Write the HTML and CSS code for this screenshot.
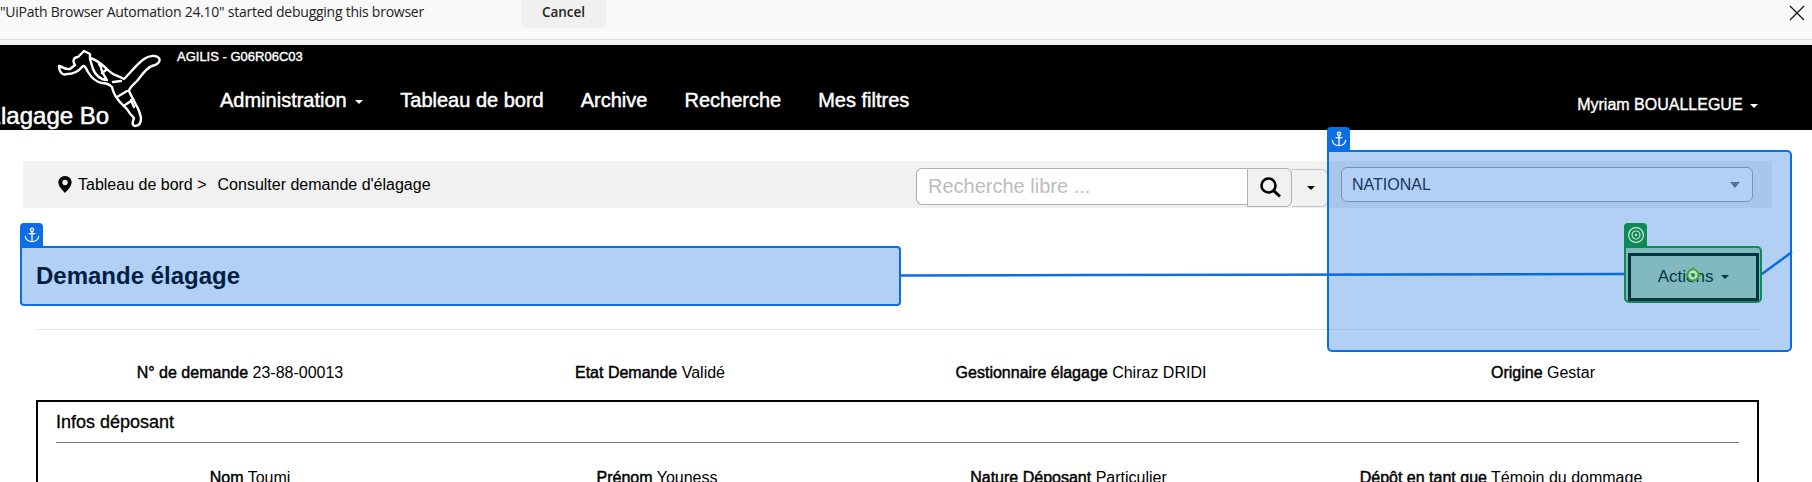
FILE: index.html
```html
<!DOCTYPE html>
<html lang="fr">
<head>
<meta charset="utf-8">
<title>Consulter demande d'élagage</title>
<link rel="stylesheet" href="styles.css">
</head>
<body>
<div class="page">
  <div class="debugbar">
    <span class="debugtext">"UiPath Browser Automation 24.10" started debugging this browser</span>
    <button class="cancel">Cancel</button>
    <svg class="close" width="16" height="16" viewBox="0 0 16 16"><path d="M1 1 L15 15 M15 1 L1 15" stroke="#111" stroke-width="1.2" fill="none"/></svg>
  </div>
  <header class="navbar">
    <div class="brand">
      <svg class="puma" width="120" height="85" viewBox="0 0 120 85">
        <g fill="none" stroke="#fff" stroke-width="2.4" stroke-linejoin="round" stroke-linecap="round">
          <path d="M18 21 C22 22 25 25 29 24 L34 20 C31 16 33 12 37 12 L43 6 L49 9 L49 13 C57 15 63 21 68 26 C73 31 78 31 83 34 C90 27 96 19 103 14 C109 10 115 10 118 13 C120 17 116 20 111 21 C105 23 101 30 96 36 C92 40 88 43 88 46 C90 51 93 55 95 60 C98 64 99 69 100 73 C100 78 98 81 94 81 C90 80 92 76 93 73 C90 70 88 68 86 64 C82 60 78 57 76 53 C73 50 72 46 71 42 C68 39 65 38 61 38 C55 37 50 32 47 27 C44 21 43 20 41 22 C37 27 31 29 26 29 C22 31 18 27 18 21 Z"/>
          <path d="M49 14 L52 24 C54 30 60 35 66 35 C63 30 60 26 60 22 L58 19"/>
          <path d="M61 28 L65 25"/>
          <path d="M72 37 L80 36 M76 52 L86 46 M84 60 L90 56 M93 62 L90 55"/>
        </g>
      </svg>
      <span class="brandname">Elagage Bo</span>
    </div>
    <div class="navmain">
      <div class="appcode">AGILIS - G06R06C03</div>
      <nav class="menu">
        <a class="menuitem">Administration <i class="caret caret-white"></i></a>
        <a class="menuitem">Tableau de bord</a>
        <a class="menuitem">Archive</a>
        <a class="menuitem">Recherche</a>
        <a class="menuitem">Mes filtres</a>
      </nav>
    </div>
    <div class="user">Myriam BOUALLEGUE <i class="caret caret-white"></i></div>
  </header>

  <main class="content">
    <div class="crumbs">
      <svg class="pin" width="14" height="17" viewBox="0 0 14 17"><path fill-rule="evenodd" d="M7 0 C3 0 0.4 3 0.4 6.4 C0.4 10.4 5 14.4 7 17 C9 14.4 13.6 10.4 13.6 6.4 C13.6 3 11 0 7 0 Z M7 3.8 A2.7 2.7 0 1 1 7 9.2 A2.7 2.7 0 1 1 7 3.8 Z" fill="#000"/></svg>
      <span class="crumb">Tableau de bord &gt;</span>
      <span class="crumb crumb-current">Consulter demande d'élagage</span>
      <div class="search">
        <input class="searchinput" placeholder="Recherche libre ...">
        <button class="searchbtn">
          <svg width="22" height="22" viewBox="0 0 22 22"><circle cx="9.5" cy="9.5" r="7" fill="none" stroke="#000" stroke-width="2.6"/><path d="M14.6 14.6 L21 20.5" stroke="#000" stroke-width="3" fill="none"/></svg>
        </button>
        <button class="caretbtn"><i class="caret"></i></button>
      </div>
      <div class="scope">NATIONAL<i class="caret caret-scope"></i></div>
    </div>

    <section class="titlerow">
      <h1 class="title">Demande élagage</h1>
      <button class="actions">Actions <i class="caret"></i></button>
    </section>
    <hr class="rule">

    <div class="fields fields-top">
      <div class="field"><b>N° de demande</b> 23-88-00013</div>
      <div class="field"><b>Etat Demande</b> Validé</div>
      <div class="field"><b>Gestionnaire élagage</b> Chiraz DRIDI</div>
      <div class="field"><b>Origine</b> Gestar</div>
    </div>

    <section class="panel">
      <h2 class="paneltitle">Infos déposant</h2>
      <div class="fields fields-panel">
        <div class="field"><b>Nom</b> Toumi</div>
        <div class="field"><b>Prénom</b> Youness</div>
        <div class="field"><b>Nature Déposant</b> Particulier</div>
        <div class="field"><b>Dépôt en tant que</b> Témoin du dommage</div>
      </div>
    </section>
  </main>

  <svg class="links" width="1812" height="482" viewBox="0 0 1812 482">
    <path d="M900 275.5 L1090 275 L1400 274.5 L1624 274" stroke="#0b6ee5" stroke-width="2.4" fill="none"/>
    <path d="M1762 274 L1792 252" stroke="#0b6ee5" stroke-width="2.4" fill="none"/>
  </svg>

  <div class="hl hl-title"></div>
  <div class="tab tab-title">
    <svg width="16" height="16" viewBox="0 0 16 16"><g fill="none" stroke="#fff" stroke-width="1.3" stroke-linecap="round"><circle cx="8" cy="2.8" r="1.6"/><path d="M8 4.4 V14.6 M5 6.6 H11 M1.4 9.5 C1.6 12.8 4.6 14.6 8 14.6 C11.4 14.6 14.4 12.8 14.6 9.5"/></g></svg>
  </div>
  <div class="hl hl-scope"></div>
  <div class="tab tab-scope">
    <svg width="16" height="16" viewBox="0 0 16 16"><g fill="none" stroke="#fff" stroke-width="1.3" stroke-linecap="round"><circle cx="8" cy="2.8" r="1.6"/><path d="M8 4.4 V14.6 M5 6.6 H11 M1.4 9.5 C1.6 12.8 4.6 14.6 8 14.6 C11.4 14.6 14.4 12.8 14.6 9.5"/></g></svg>
  </div>
  <div class="hl-target"></div>
  <div class="tab tab-target">
    <svg width="18" height="18" viewBox="0 0 18 18"><g fill="none" stroke="#cfe6dc" stroke-width="1.2"><circle cx="9" cy="9" r="7.4"/><circle cx="9" cy="9" r="4"/></g><circle cx="9" cy="9" r="1.2" fill="#cfe6dc"/></svg>
  </div>
  <svg class="cursor" width="18" height="18" viewBox="0 0 18 18">
    <circle cx="9" cy="9" r="5.6" fill="#d9ebe4" fill-opacity=".75" stroke="#3aa52f" stroke-width="1.8"/>
    <circle cx="9" cy="9" r="2" fill="#129a2f"/>
    <path d="M9 1 V3.4 M9 14.6 V17 M1 9 H3.4 M14.6 9 H17" stroke="#3aa52f" stroke-width="1.4"/>
  </svg>
</div>
</body>
</html>
```

FILE: styles.css
```css
* { box-sizing: border-box; }
html, body { margin: 0; padding: 0; height: 482px; overflow: hidden; background: #fff; }
body { font-family: "Liberation Sans", Arial, sans-serif; font-size: 16px; color: #000; }
.page { position: relative; width: 1812px; height: 482px; overflow: hidden; }

.debugbar { height: 45px; background: #f9f9f9; border-bottom: 5px solid #f1f1f1; box-shadow: inset 0 -1px 0 #dcdcdc; display: flex; align-items: flex-start; }
.debugtext { font-family: "Open Sans", "Noto Sans", sans-serif; font-size: 14px; line-height: 24px; color: #222; width: 521px; white-space: nowrap; letter-spacing: -.25px; }
.cancel { width: 85px; height: 28px; border: 0; border-radius: 0 0 4px 4px; background: #f0f0f0; font-family: "Open Sans", "Noto Sans", sans-serif; font-size: 13.5px; font-weight: 600; color: #222; padding: 0 0 4px; }
.close { margin-left: auto; margin-right: 7px; margin-top: 5px; }

.navbar { height: 85px; background: #000; color: #fff; display: flex; position: relative; }
.brand { width: 220px; position: relative; flex: none; }
.puma { position: absolute; left: 41px; top: 0; }
.brandname { position: absolute; left: -15px; top: 57px; font-size: 24px; font-weight: 400; -webkit-text-stroke: .5px #fff; white-space: nowrap; line-height: 28px; }
.navmain { display: flex; flex-direction: column; }
.appcode { font-size: 13px; line-height: 16px; margin: 4px 0 0 -43px; -webkit-text-stroke: .4px #fff; white-space: nowrap; }
.menu { display: flex; gap: 37px; margin-top: 23px; }
.menuitem { font-size: 20px; line-height: 24px; -webkit-text-stroke: .45px #fff; white-space: nowrap; }
.user { margin-left: auto; margin-right: 54px; margin-top: 50px; font-size: 16px; line-height: 20px; -webkit-text-stroke: .35px #fff; white-space: nowrap; }

.caret { display: inline-block; width: 0; height: 0; border-left: 4.5px solid transparent; border-right: 4.5px solid transparent; border-top: 4.5px solid #000; vertical-align: middle; margin-left: 3px; }
.caret-white { border-top-color: #fff; }

.content { padding-top: 31px; }
.crumbs { display: flex; align-items: center; margin: 0 40px 0 23px; height: 47px; background: #f1f1f1; padding-left: 35px; padding-right: 19px; }
.pin { flex: none; margin-right: 6px; }
.crumb { font-size: 16px; white-space: nowrap; }
.crumb-current { margin-left: 11px; }
.search { display: flex; align-items: flex-start; margin-left: auto; height: 38px; margin-top: 4px; }
.searchinput { width: 331px; height: 37px; border: 1px solid #b0b0b0; border-right: 0; border-radius: 6px 0 0 6px; padding: 0 11px; font: 20px "Liberation Sans", Arial, sans-serif; background: #fff; }
.searchinput::placeholder { color: #bdbdbd; opacity: 1; }
.searchbtn { width: 45px; height: 39px; border: 1px solid #b0b0b0; border-radius: 0 6px 6px 0; background: #f1f1f1; padding: 0; display: flex; align-items: center; justify-content: center; }
.caretbtn { width: 36px; height: 38px; margin-top: 1px; border: 1px solid #c4c4c4; border-left: 0; border-radius: 0 6px 6px 0; background: #f1f1f1; padding: 0 0 0 3px; }
.caretbtn .caret { margin: 0; }
.scope { flex: none; width: 412px; height: 35px; margin-left: 13px; border: 1px solid #a8a8a8; border-radius: 6px; background: #fff; font-size: 16px; line-height: 33px; padding-left: 10px; color: #222; display: flex; align-items: center; justify-content: space-between; padding-right: 12px; }
.caret-scope { border-left-width: 5px; border-right-width: 5px; border-top: 6px solid #777; margin: 0; }

.titlerow { display: flex; align-items: center; justify-content: space-between; height: 60px; margin: 38px 52px 0 36px; }
.title { margin: 0; font-size: 24px; font-weight: 700; line-height: 30px; color: #000; }
.actions { width: 131px; height: 48px; border: 3px solid #000; background: #fff; font: 17px "Liberation Sans", Arial, sans-serif; color: #000; padding: 0; margin-top: 1px; margin-right: 1px; }
.rule { height: 1px; border: 0; background: #e6e6e6; margin: 23px 52px 0 36px; }

.fields { display: grid; grid-template-columns: 408px 412px 450px 474px; text-align: center; font-size: 16px; white-space: nowrap; }
.field b { font-weight: 400; -webkit-text-stroke: .45px #000; }
.fields-top { margin: 33px 0 0 36px; line-height: 20px; }
.panel { margin: 17px 53px 0 36px; border: 2px solid #000; height: 120px; padding: 0 18px; }
.paneltitle { margin: 0; font-size: 18px; font-weight: 400; line-height: 40px; height: 41px; border-bottom: 1px solid #777; -webkit-text-stroke: .3px #000; }
.fields-panel { grid-template-columns: 388px 426px 397px 468px; margin: 25px 0 0 -18px; padding-left: 18px; line-height: 20px; }

.links { position: absolute; left: 0; top: 0; pointer-events: none; }
.hl { position: absolute; background: rgba(0, 98, 218, .3); border: 2.4px solid #0b6ee5; }
.hl-title { left: 20px; top: 246px; width: 881px; height: 60px; border-radius: 0 4px 4px 4px; }
.hl-scope { left: 1327px; top: 150px; width: 465px; height: 202px; border-radius: 0 5px 5px 5px; }
.hl-target { position: absolute; left: 1624px; top: 246px; width: 138px; height: 57px; background: rgba(0, 123, 47, .27); border: 2.4px solid #0d8a55; border-radius: 0 5px 5px 5px; }
.tab { position: absolute; width: 23px; height: 23px; border-radius: 4px 4px 0 0; display: flex; align-items: center; justify-content: center; background: #0b6ee5; }
.tab-title { left: 20px; top: 223px; }
.tab-scope { left: 1327px; top: 127px; }
.tab-target { left: 1624px; top: 223px; background: #0d8a55; }
.cursor { position: absolute; left: 1684px; top: 266px; }
```
